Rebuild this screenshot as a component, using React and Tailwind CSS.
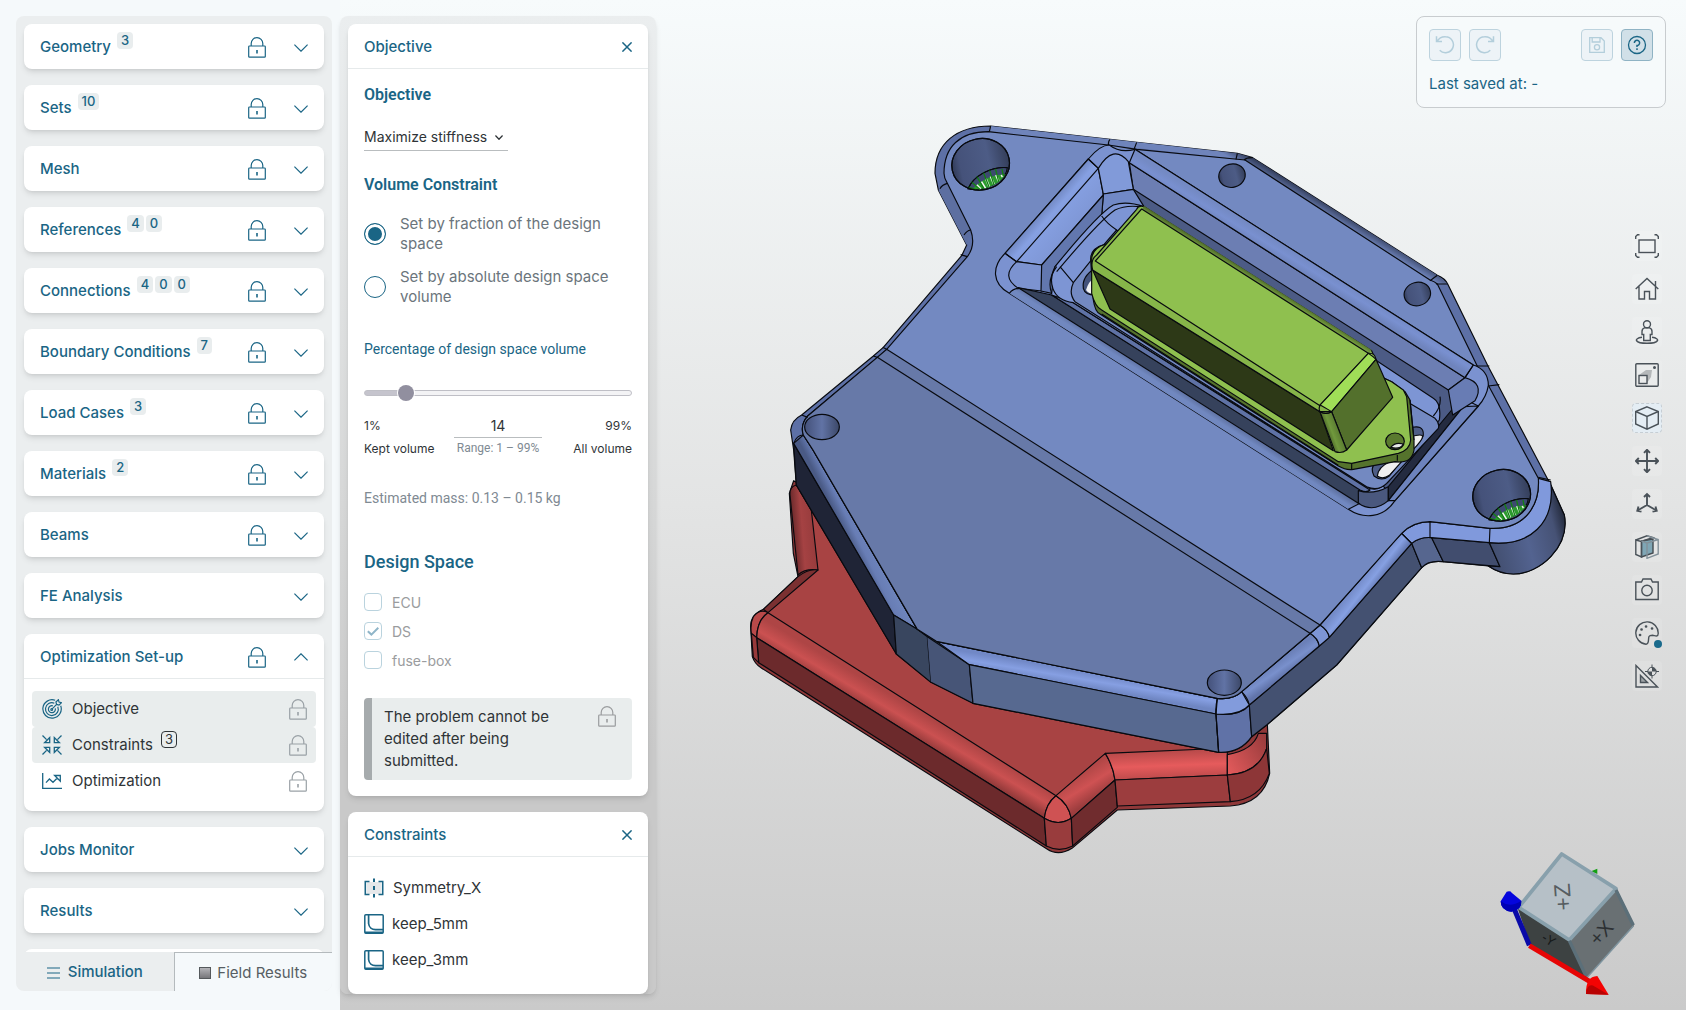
import { useState } from "react";

const sections = [
  { title: "Geometry", counts: [3], locked: true },
  { title: "Sets", counts: [10], locked: true },
  { title: "Mesh", counts: [], locked: true },
  { title: "References", counts: [4, 0], locked: true },
  { title: "Connections", counts: [4, 0, 0], locked: true },
  { title: "Boundary Conditions", counts: [7], locked: true },
  { title: "Load Cases", counts: [3], locked: true },
  { title: "Materials", counts: [2], locked: true },
  { title: "Beams", counts: [], locked: true },
  { title: "FE Analysis", counts: [], locked: false },
];

const LockIcon = ({ className = "" }) => (
  <svg viewBox="0 0 18 21" className={`w-[18px] h-[21px] shrink-0 ${className}`} fill="none" stroke="currentColor" strokeWidth="1.2">
    <rect x="0.7" y="9" width="16.6" height="11.2" rx="0.8" />
    <path d="M3.2 9V6.4a5.8 5.8 0 0 1 11.6 0V9" />
    <path d="M9 13v3.6" strokeWidth="1.6" />
  </svg>
);

const Chevron = ({ up }) => (
  <svg viewBox="0 0 14 8" className="w-[14px] h-2 shrink-0" fill="none" stroke="currentColor" strokeWidth="1.2">
    <path d={up ? "M0.4 7.4 7 0.8l6.6 6.6" : "M0.4 0.6 7 7.2l6.6-6.6"} />
  </svg>
);

const CloseIcon = () => (
  <svg viewBox="0 0 10 10" className="w-[10px] h-[10px]" stroke="currentColor" strokeWidth="1.5">
    <path d="M0.4 0.4 9.6 9.6M9.6 0.4 0.4 9.6" />
  </svg>
);

const TargetIcon = () => (
  <svg viewBox="0 0 20 20" className="w-5 h-5" fill="none" stroke="currentColor" strokeWidth="1.2">
    <path d="M13.2 1.3A9.2 9.2 0 1 0 18.7 6.8" />
    <path d="M12.3 4.2A6.4 6.4 0 1 0 15.8 7.7" />
    <path d="M10.8 6.8A3.5 3.5 0 1 0 13.3 9.4" />
    <path d="M9.7 10.4 14.6 5.4M14.6 5.4 13.9 3 16.4.7l.6 2.4 2.4.6L17 6.1z" />
    <circle cx="9.7" cy="10.4" r="0.9" />
  </svg>
);

const ConvergeIcon = () => (
  <svg viewBox="0 0 20 20" className="w-5 h-5" fill="none" stroke="currentColor" strokeWidth="1.3">
    <path d="M0.5 0.5 4.6 4.6M19.5 0.5 15.4 4.6M0.5 19.5 4.6 15.4M19.5 19.5 15.4 15.4" />
    <path d="M7.7 2.6V7.7H2.6L4.3 6 6 4.3zM12.3 2.6V7.7H17.4L15.7 6 14 4.3zM7.7 17.4V12.3H2.6L4.3 14 6 15.7zM12.3 17.4V12.3H17.4L15.7 14 14 15.7z" />
  </svg>
);

const TrendIcon = () => (
  <svg viewBox="0 0 20 16" className="w-5 h-4" fill="none" stroke="currentColor" strokeWidth="1.3">
    <path d="M0.7 0V15.3H20" />
    <path d="M4 9.6 7.4 6 11 9.3 15.3 5M12.6 2.5H18.3V8.2L15.4 5.3z" />
  </svg>
);

const SymmetryIcon = () => (
  <svg viewBox="0 0 20 20" className="w-5 h-5" fill="none" stroke="#1a6585" strokeWidth="1.6">
    <rect x="3" y="4" width="14" height="12" fill="#e6e8ea" stroke="none" />
    <path d="M5.5 3.5H1.3V16.5H5.5M14.5 3.5H18.7V16.5H14.5" />
    <path d="M10 0.5V4M10 8V12M10 16V19.5" strokeWidth="2" />
  </svg>
);

const KeepIcon = () => (
  <svg viewBox="0 0 20 20" className="w-5 h-5" fill="none" stroke="#1a6585" strokeWidth="1.5">
    <rect x="0.8" y="0.8" width="18.4" height="18.4" rx="1" />
    <path d="M4.6 1V9.5C5 13.5 8 15.7 11.5 15.7H19" strokeWidth="1.7" />
    <path d="M1 18.4H19" strokeWidth="1.8" />
  </svg>
);

const SectionCard = ({ title, counts = [], locked, open, children }) => (
  <section className="shrink-0 rounded-lg bg-white shadow-md">
    <button type="button" aria-expanded={!!open} className={`flex h-[45px] w-full items-center px-4 pt-0.5 text-[#1a6585] ${open ? "border-b border-[#e6eaeb]" : ""}`}>
      <span className="text-[15px] font-medium">{title}</span>
      {counts.length > 0 && (
        <span className="mb-3.5 ml-1.5 flex gap-0.5">
          {counts.map((n, i) => (
            <span key={i} className="h-[17px] rounded bg-[#e9edee] px-1 text-[13px] leading-[17px] font-medium">{n}</span>
          ))}
        </span>
      )}
      <span className="ml-auto flex items-center gap-7">
        {locked && <LockIcon />}
        <Chevron up={open} />
      </span>
    </button>
    {children}
  </section>
);

const setupItems = [
  { label: "Objective", icon: <TargetIcon />, active: true },
  { label: "Constraints", icon: <ConvergeIcon />, active: true, count: 3 },
  { label: "Optimization", icon: <TrendIcon /> },
];

const Sidebar = () => (
  <aside className="h-full w-[340px] shrink-0 bg-[#f5f9fb] pt-4 pr-2 pb-[19px] pl-4">
    <div className="flex h-full flex-col overflow-hidden rounded-lg bg-[#ebeeef]">
      <div className="flex min-h-0 flex-1 flex-col gap-4 overflow-hidden p-2 pb-0">
        {sections.map((s) => (
          <SectionCard key={s.title} {...s} />
        ))}
        <SectionCard title="Optimization Set-up" locked open>
          <ul className="px-2 py-3">
            {setupItems.map((item) => (
              <li key={item.label}>
                <button type="button" className={`flex h-9 w-full items-center rounded pr-[9px] pl-2.5 text-[15px] text-[#2f3437] ${item.active ? "bg-[#e9eded]" : ""}`}>
                  <span className="mr-2.5 text-[#1a6585]">{item.icon}</span>
                  {item.label}
                  {item.count && (
                    <span className="mb-3 ml-2 h-[17px] rounded border border-[#2f3437] px-[3px] text-[13px] leading-[15px]">{item.count}</span>
                  )}
                  <LockIcon className="ml-auto text-[#9aa1a6]" />
                </button>
              </li>
            ))}
          </ul>
        </SectionCard>
        <SectionCard title="Jobs Monitor" />
        <SectionCard title="Results" />
        <div className="h-[45px] shrink-0 rounded-lg bg-white shadow-md" />
      </div>
      <div className="flex h-[39px] shrink-0 text-[15px]">
        <button type="button" className="flex flex-1 items-center justify-center gap-2 pt-0.5 font-medium text-[#1a6585]">
          <svg viewBox="0 0 13 12" className="h-3 w-[13px]" stroke="currentColor" strokeWidth="1.1">
            <path d="M0 1H13M0 6H13M0 11H13" />
          </svg>
          Simulation
        </button>
        <button type="button" className="flex flex-1 items-center justify-center gap-1.5 border-t border-l border-[#b4babd] bg-[#f5f9fb] pt-0.5 text-[#575e63]">
          <span className="h-3 w-3 border border-[#55595c] bg-linear-to-b from-[#b4b4b8] to-[#77777b]" />
          Field Results
        </button>
      </div>
    </div>
  </aside>
);

const PanelHeader = ({ title }) => (
  <header className="flex h-[45px] items-center justify-between border-b border-[#e6eaeb] px-4 pt-0.5 text-[#1a6585]">
    <h2 className="text-[15px] font-medium">{title}</h2>
    <button type="button" aria-label={`Close ${title}`}>
      <CloseIcon />
    </button>
  </header>
);

const Radio = ({ id, label, checked, onChange }) => (
  <label htmlFor={id} className="flex items-center gap-[14px] text-[15px] leading-5 text-[#6b757c]">
    <input
      id={id}
      type="radio"
      name="volume-mode"
      checked={checked}
      onChange={onChange}
      className="h-[22px] w-[22px] shrink-0 appearance-none rounded-full border border-[#1a6585] bg-white checked:bg-[#1a6585] checked:shadow-[inset_0_0_0_3px_white]"
    />
    {label}
  </label>
);

const ObjectivePanel = () => {
  const [mode, setMode] = useState("fraction");
  const [percent, setPercent] = useState(14);
  const fill = ((percent - 1) / 98) * 100;

  return (
    <section className="shrink-0 rounded-lg bg-white shadow-md">
      <PanelHeader title="Objective" />
      <div className="px-4 pt-[15px] pb-4">
        <h3 className="font-['Roboto',sans-serif] text-[16px] leading-[22px] font-semibold text-[#1a6585]">Objective</h3>
        <div className="relative mt-[17px] w-36">
          <select aria-label="Objective" className="h-[28px] w-full appearance-none border-b border-[#b9bdbf] bg-transparent text-[14px] text-[#2f3437]">
            <option>Maximize stiffness</option>
          </select>
          <svg viewBox="0 0 8 5" className="pointer-events-none absolute top-3 right-[5px] h-[5px] w-2" fill="none" stroke="#2f3437" strokeWidth="1.3">
            <path d="M0.4 0.5 4 4.3 7.6 0.5" />
          </svg>
        </div>

        <h3 className="mt-[23px] font-['Roboto',sans-serif] text-[16px] leading-[22px] font-semibold text-[#1a6585]">Volume Constraint</h3>
        <div className="mt-[18px] flex flex-col gap-[13px]">
          <Radio id="fraction" label="Set by fraction of the design space" checked={mode === "fraction"} onChange={() => setMode("fraction")} />
          <Radio id="absolute" label="Set by absolute design space volume" checked={mode === "absolute"} onChange={() => setMode("absolute")} />
        </div>

        <label htmlFor="percent" className="mt-8 block font-['Roboto',sans-serif] text-[14px] leading-5 text-[#1a6585]">
          Percentage of design space volume
        </label>
        <input
          id="percent"
          type="range"
          min="1"
          max="99"
          value={percent}
          onChange={(e) => setPercent(Number(e.target.value))}
          style={{ background: `linear-gradient(to right, #c5c4cd ${fill}%, #f3f3f5 ${fill}%)` }}
          className="mt-[31px] block h-1.5 w-full appearance-none rounded-full border border-[#bfbfc6] [&::-webkit-slider-thumb]:h-4 [&::-webkit-slider-thumb]:w-4 [&::-webkit-slider-thumb]:appearance-none [&::-webkit-slider-thumb]:rounded-full [&::-webkit-slider-thumb]:bg-[#918f9f] [&::-webkit-slider-thumb]:shadow-[0_0_0_1px_white]"
        />
        <div className="mt-[18px] flex justify-between text-[12px] text-[#2f3437]">
          <div className="w-[80px] leading-[23px] whitespace-nowrap">
            <p>1%</p>
            <p>Kept volume</p>
          </div>
          <div className="w-[88px] text-center">
            <input
              type="text"
              aria-label="Volume percentage"
              value={percent}
              onChange={(e) => setPercent(Number(e.target.value) || 1)}
              className="h-[24px] w-full border-b border-[#b9bdbf] text-center text-[14px]"
            />
            <p className="font-['Roboto',sans-serif] text-[12px] leading-5 whitespace-nowrap text-[#808a93]">Range: 1 – 99%</p>
          </div>
          <div className="w-[80px] text-right leading-[23px]">
            <p>99%</p>
            <p>All volume</p>
          </div>
        </div>
        <p className="mt-[28px] font-['Roboto',sans-serif] text-[14px] leading-5 text-[#808a93]">Estimated mass: 0.13 – 0.15 kg</p>

        <h3 className="mt-[42px] font-['Roboto',sans-serif] text-[18px] leading-6 font-medium text-[#1a6585]">Design Space</h3>
        <div className="mt-[19px] flex flex-col gap-[11px]">
          {["ECU", "DS", "fuse-box"].map((name) => (
            <label key={name} className="relative flex h-[18px] items-center gap-[10px] text-[14px] text-[#9a9c9e]">
              <input type="checkbox" disabled defaultChecked={name === "DS"} className="peer h-[18px] w-[18px] appearance-none rounded border border-[#bad3de] bg-white" />
              <svg viewBox="0 0 12 9" className="absolute top-[5px] left-[3px] hidden h-[9px] w-3 peer-checked:block" fill="none" stroke="#8fb5c8" strokeWidth="2">
                <path d="M0.8 4.2 4.4 7.6 11.3 0.8" />
              </svg>
              {name}
            </label>
          ))}
        </div>

        <div className="mt-[29px] flex items-start justify-between rounded border-l-8 border-[#a6abad] bg-[#e9eded] pt-2 pr-4 pb-2 pl-3">
          <p className="w-[176px] text-[15px] leading-[22px] text-[#2f3437]">The problem cannot be edited after being submitted.</p>
          <LockIcon className="text-[#9a9c9e]" />
        </div>
      </div>
    </section>
  );
};

const ConstraintsPanel = () => (
  <section className="shrink-0 rounded-lg bg-white shadow-md">
    <PanelHeader title="Constraints" />
    <ul className="px-4 pt-[13px] pb-4 text-[15px] text-[#2f3437]">
      <li className="flex h-9 items-center gap-[9px]"><SymmetryIcon />Symmetry_X</li>
      <li className="flex h-9 items-center gap-2"><KeepIcon />keep_5mm</li>
      <li className="flex h-9 items-center gap-2"><KeepIcon />keep_3mm</li>
    </ul>
  </section>
);

const SaveBox = () => (
  <div className="w-[250px] rounded-lg border border-[#c8cccf] bg-[#f6fafb]/80 p-3 text-[#1a6585]">
    <div className="flex gap-2">
      <button type="button" aria-label="Undo" disabled className="grid h-8 w-8 place-items-center rounded border border-[#bdd3de] bg-[#edf3f7] text-[#b3cedb]">
        <svg viewBox="0 0 20 20" className="h-5 w-5" fill="none" stroke="currentColor" strokeWidth="1.5">
          <path d="M1.500 1.200V6.600H7M1.900 6.500C4 3 7 1.500 10.500 1.700A8 8 0 1 1 4.700 15.300" />
        </svg>
      </button>
      <button type="button" aria-label="Redo" disabled className="grid h-8 w-8 place-items-center rounded border border-[#bdd3de] bg-[#edf3f7] text-[#b3cedb]">
        <svg viewBox="0 0 20 20" className="h-5 w-5" fill="none" stroke="currentColor" strokeWidth="1.5">
          <path d="M18.500 1.200V6.600H13M18.100 6.500C16 3 13 1.500 9.500 1.700A8 8 0 1 0 15.300 15.300" />
        </svg>
      </button>
      <button type="button" aria-label="Save" disabled className="ml-auto grid h-8 w-8 place-items-center rounded border border-[#bdd3de] bg-[#edf3f7] text-[#b3cedb]">
        <svg viewBox="0 0 18 18" className="h-[18px] w-[18px]" fill="none" stroke="currentColor" strokeWidth="1.3">
          <path d="M1.700 1.700H13L16.300 5V16.300H1.700zM4.200 1.700V6H12V1.700" />
          <circle cx="9" cy="11.3" r="2.6" />
        </svg>
      </button>
      <button type="button" aria-label="Help" className="grid h-8 w-8 place-items-center rounded border border-[#8fb3c4] bg-[#d1e0e8]">
        <svg viewBox="0 0 20 20" className="h-5 w-5" fill="none" stroke="currentColor" strokeWidth="1.3">
          <circle cx="10" cy="10" r="8.5" />
          <path d="M7.400 8A2.600 2.600 0 1 1 10 10.500V12" strokeWidth="1.5" />
          <path d="M10 13.300V15" strokeWidth="1.5" />
        </svg>
      </button>
    </div>
    <p className="mt-3 text-[15px] leading-[22px]">Last saved at: -</p>
  </div>
);

const viewTools = [
  {
    name: "Fit view",
    icon: (
      <>
        <rect x="4" y="6" width="16" height="12.5" />
        <path d="M.7 5V2.500L2.500.7H4.500M19.500.7h2L23.300 2.500V5M.7 19v2.500l1.800 1.800h2M19.500 23.300h2l1.800-1.800V19" />
      </>
    ),
  },
  { name: "Home view", icon: <path d="M.7 12 12 1.500 23.300 12M4 9.500V22H9.500V14.500H14.500V22H20.500V9.500M20.500 9V4" /> },
  {
    name: "Walk",
    icon: (
      <>
        <circle cx="12" cy="4.2" r="3.5" />
        <path d="M9.500 7.800H14.500C16.500 8.500 17 9.500 17 11.500V14.500H15.300V20.500H8.700V14.500H7V11.500C7 9.500 7.500 8.500 9.500 7.800z" />
        <path d="M7 17.300C-2 18.500 0 23.300 12 23.300S26 18.500 17 17.300" />
      </>
    ),
  },
  {
    name: "Projection",
    icon: (
      <>
        <path d="M4 12 11 7H17L16 14 12 20V12z" fill="#b5b8ba" stroke="none" />
        <rect x=".8" y=".8" width="22.4" height="22.4" rx="1" />
        <rect x="4" y="12.5" width="8" height="8" />
        <circle cx="19.5" cy="4.5" r="0.8" />
      </>
    ),
  },
  { name: "Shading", active: true, icon: <path d="M12 .8 23.300 5.500V18L12 23.200.7 18V5.500zM.7 5.500 12 10.500 23.300 5.500M12 10.500V23" /> },
  { name: "Pan", icon: <path d="M12 .8V23.200M.8 12H23.200M9 3.800 12 .8 15 3.800M9 20.200 12 23.200 15 20.200M3.800 9 .8 12 3.800 15M20.200 9 23.200 12 20.200 15" strokeWidth="1.9" /> },
  { name: "Axes", icon: <path d="M12 2V13M12 13 2.500 18.500M12 13 21.500 18.500M9 5 12 2 15 5M3.500 14.500 2.300 18.700 6.500 19.700M20.500 14.500 21.700 18.700 17.500 19.700" strokeWidth="1.9" /> },
  {
    name: "Section cut",
    icon: (
      <>
        <path d="M6.500 6 18 4V18L6.500 22z" fill="#7fa6b5" stroke="#454c52" />
        <path d="M.8 5 6.500 6.500V22L.8 19.500zM.8 5 12 .8 18 2.500 6.500 6.500" />
        <path d="M12 .8 23.200 4.500V19L12 23.300V8L23.200 4.500M12 8 6.500 6" stroke="#83919a" />
      </>
    ),
  },
  {
    name: "Screenshot",
    icon: (
      <>
        <path d="M.8 4H6.500L8 1H16L17.500 4H23.200V21.500H.8z" />
        <circle cx="12" cy="12.5" r="5.2" />
      </>
    ),
  },
  {
    name: "Appearance",
    dot: true,
    icon: (
      <>
        <path d="M14 15.500C13 17.500 14.500 23.200 11 23.200A11.200 11.200 0 1 1 23.200 12.500C23 16.500 20 14.500 17.500 14.300 16 14.300 14.500 14.500 14 15.500z" />
        <path d="M5 14h.1M6.500 8.500h.1M11 5.500h.1M17 7.500h.1" strokeWidth="2.6" strokeLinecap="round" />
      </>
    ),
  },
  {
    name: "Measure",
    icon: (
      <>
        <path d="M1 1.500V23H22.500z" />
        <path d="M5.500 11.500V18.500H12.500z" fill="#9fa4a7" />
        <circle cx="17" cy="7.5" r="4.2" strokeWidth="1" />
        <path d="M17 7.500V3.300A4.200 4.200 0 0 1 21.200 7.500zM17 7.500V11.700A4.200 4.200 0 0 1 12.800 7.500z" fill="#4a5259" stroke="none" />
        <path d="M17 .5V3.300M21 7.500H24M17 11.700V14.500M10 7.500H13" strokeWidth="1" />
      </>
    ),
  },
];

const ViewToolbar = () => (
  <nav aria-label="View tools" className="mt-[123px] mr-1 flex flex-col gap-[13px]">
    {viewTools.map((t) => (
      <button key={t.name} type="button" aria-label={t.name} className={`relative grid h-[30px] w-[30px] place-items-center rounded ${t.active ? "border border-dashed border-[#c6ced4] bg-[#e4edf4]" : "bg-white/10"}`}>
        <svg viewBox="0 0 24 24" className="h-6 w-6" fill="none" stroke="#4a5259" strokeWidth="1.4">
          {t.icon}
        </svg>
        {t.dot && <span className="absolute right-0 bottom-0 h-2 w-2 rounded-full bg-[#1a6a8c]" />}
      </button>
    ))}
  </nav>
);

const BigHole = ({ cx, cy }) => (
  <g transform={`translate(${cx} ${cy})`}>
    <ellipse rx="87" ry="77" transform="rotate(-12)" fill="url(#hole)" />
    <path d="M-38 74C-22 34 32 6 80 10C78 38 30 84-38 74z" fill="#3d4a70" />
    <path d="M-24 74C-4 52 28 32 74 30C62 54 20 80-24 74z" fill="#2c9a2e" stroke="none" />
    <path d="M-12 62 0 74M2 52 14 72M16 44 26 68M30 36 40 60M46 32 54 50M62 32 66 38" stroke="#f3f5f4" strokeWidth="6" />
    <path d="M-38 68-14 76M-28 52 0 77M-12 36 12 76M8 24 26 70M26 16 40 62M44 12 54 52M64 14 68 36" stroke="#128014" strokeWidth="4" />
    <path d="M-38 74C-22 34 32 6 80 10" fill="none" strokeWidth="3" />
    <ellipse rx="87" ry="77" transform="rotate(-12)" fill="none" />
  </g>
);

const Model = () => (
  <svg viewBox="-1200 -330 4038 3030" className="absolute inset-0 h-full w-full" role="img" aria-label="3D model" stroke="#080a0f" strokeWidth="3.5" strokeLinejoin="round">
    <defs>
      <linearGradient id="hole">
        <stop offset="0" stopColor="#313b58" />
        <stop offset="0.15" stopColor="#45527a" />
        <stop offset="0.65" stopColor="#4d5c86" />
        <stop offset="1" stopColor="#343e5a" />
      </linearGradient>
      <linearGradient id="hole2">
        <stop offset="0" stopColor="#44517a" />
        <stop offset="0.5" stopColor="#6173a5" />
        <stop offset="1" stopColor="#3c4868" />
      </linearGradient>
      <linearGradient id="redBevel" gradientUnits="userSpaceOnUse" x1="500" y1="1783" x2="460" y2="1850">
        <stop offset="0" stopColor="#ae4545" />
        <stop offset="0.5" stopColor="#cb5151" />
        <stop offset="1" stopColor="#8e3838" />
      </linearGradient>
      <linearGradient id="redBevel2" gradientUnits="userSpaceOnUse" x1="1270" y1="1922" x2="1273" y2="2004">
        <stop offset="0" stopColor="#b64949" />
        <stop offset="0.55" stopColor="#e65b5c" />
        <stop offset="1" stopColor="#bf4b4c" />
      </linearGradient>
      <linearGradient id="redBevel3" gradientUnits="userSpaceOnUse" x1="1018" y1="1990" x2="1065" y2="2065">
        <stop offset="0" stopColor="#b04646" />
        <stop offset="0.5" stopColor="#cf5253" />
        <stop offset="1" stopColor="#9c3d3e" />
      </linearGradient>
      <linearGradient id="redEdge" gradientUnits="userSpaceOnUse" x1="150" y1="1290" x2="228" y2="1284">
        <stop offset="0" stopColor="#572123" />
        <stop offset="0.5" stopColor="#a54243" />
        <stop offset="1" stopColor="#963b3c" />
      </linearGradient>
      <linearGradient id="redLobe" gradientUnits="userSpaceOnUse" x1="1462" y1="1960" x2="1580" y2="1890">
        <stop offset="0" stopColor="#dd5859" />
        <stop offset="1" stopColor="#9a3c3d" />
      </linearGradient>
      <linearGradient id="frontBevel" gradientUnits="userSpaceOnUse" x1="1010" y1="1680" x2="1002" y2="1728">
        <stop offset="0" stopColor="#7188c6" />
        <stop offset="0.5" stopColor="#869fe2" />
        <stop offset="1" stopColor="#6f86c2" />
      </linearGradient>
      <linearGradient id="leftBevel" gradientUnits="userSpaceOnUse" x1="290" y1="1220" x2="350" y2="1190">
        <stop offset="0" stopColor="#4a5a85" />
        <stop offset="0.4" stopColor="#687db5" />
        <stop offset="1" stopColor="#7087be" />
      </linearGradient>
      <linearGradient id="sideBevel" gradientUnits="userSpaceOnUse" x1="1840" y1="1435" x2="1882" y2="1468">
        <stop offset="0" stopColor="#748bc8" />
        <stop offset="0.5" stopColor="#86a0e2" />
        <stop offset="1" stopColor="#5f73ab" />
      </linearGradient>
      <linearGradient id="sideBevel2" gradientUnits="userSpaceOnUse" x1="1607" y1="1658" x2="1634" y2="1697">
        <stop offset="0" stopColor="#6b80b8" />
        <stop offset="0.5" stopColor="#7990cc" />
        <stop offset="1" stopColor="#6174aa" />
      </linearGradient>
      <linearGradient id="edgeTop" gradientUnits="userSpaceOnUse" x1="1840" y1="330" x2="1823" y2="358">
        <stop offset="0" stopColor="#35405f" />
        <stop offset="1" stopColor="#6f84bb" />
      </linearGradient>
      <linearGradient id="wallNw" gradientUnits="userSpaceOnUse" x1="920" y1="290" x2="1000" y2="360">
        <stop offset="0" stopColor="#738ac5" />
        <stop offset="0.25" stopColor="#86a0e2" />
        <stop offset="1" stopColor="#7f97d6" />
      </linearGradient>
      <linearGradient id="wallSw" gradientUnits="userSpaceOnUse" x1="1332" y1="868" x2="1350" y2="840">
        <stop offset="0" stopColor="#7188c0" />
        <stop offset="1" stopColor="#4d5c84" />
      </linearGradient>
      <linearGradient id="wallNe" gradientUnits="userSpaceOnUse" x1="1690" y1="442" x2="1668" y2="478">
        <stop offset="0" stopColor="#748ac4" />
        <stop offset="0.5" stopColor="#7990d0" />
        <stop offset="1" stopColor="#6f84bd" />
      </linearGradient>
      <linearGradient id="greenTop" gradientUnits="userSpaceOnUse" x1="1560" y1="500" x2="1545" y2="524">
        <stop offset="0" stopColor="#3f5521" />
        <stop offset="1" stopColor="#8cbc4d" />
      </linearGradient>
      <linearGradient id="greenEdge" gradientUnits="userSpaceOnUse" x1="1755" y1="970" x2="1795" y2="955">
        <stop offset="0" stopColor="#3e5220" />
        <stop offset="0.5" stopColor="#70993d" />
        <stop offset="1" stopColor="#5b7c31" />
      </linearGradient>
      <linearGradient id="lobe" gradientUnits="userSpaceOnUse" x1="2240" y1="1300" x2="2476" y2="1240">
        <stop offset="0" stopColor="#414d6d" />
        <stop offset="0.5" stopColor="#536390" />
        <stop offset="0.85" stopColor="#465275" />
        <stop offset="1" stopColor="#262d40" />
      </linearGradient>
    </defs>

    {/* fuse box cover, red */}
    <path d="M161 1112 148 1150 160 1330 174 1400 70 1498Q30 1515 32 1552L37 1640Q44 1662 64 1674L921 2217Q955 2240 996 2215L1132 2100 1471 2088Q1570 2080 1589 1990L1580 1800 900 1500z" fill="#8f3839" />
    <path d="M169 1120 214 1200 234 1380 84 1508 948 2057 1096 1930 1470 1915 1500 1800 700 1600z" fill="#a84343" stroke="none" />
    <path d="M169 1125Q148 1130 150 1155L174 1395Q195 1375 234 1380L214 1200z" fill="url(#redEdge)" />
    <path d="M70 1498 174 1400Q205 1375 234 1380L84 1508z" fill="#7b3031" />
    <path d="M84 1508Q60 1495 40 1520 30 1540 34 1570L50 1583Q52 1530 84 1508z" fill="#b84949" />
    <path d="M84 1508 948 2057Q918 2080 913 2125L50 1583Q52 1530 84 1508z" fill="url(#redBevel)" />
    <path d="M50 1583 913 2125 919 2208 56 1658z" fill="#6c2a2c" />
    <path d="M34 1570 50 1583 56 1658 40 1642z" fill="#97393a" />
    <path d="M948 2057Q985 2080 994 2125 955 2150 913 2125 918 2080 948 2057z" fill="#cf5253" />
    <path d="M913 2125Q955 2150 994 2125L998 2208Q958 2228 919 2208z" fill="#993c3d" />
    <path d="M948 2057 1096 1930Q1120 1970 1125 2010L994 2125Q985 2080 948 2057z" fill="url(#redBevel3)" />
    <path d="M994 2125 1125 2010 1132 2092 998 2208z" fill="#702c2e" />
    <path d="M1096 1930 1400 1917 1462 1920V1995L1125 2010Q1120 1970 1096 1930z" fill="url(#redBevel2)" />
    <path d="M1125 2010 1462 1995 1471 2075 1132 2088z" fill="#9c3d3e" />
    <path d="M1462 1934Q1540 1920 1555 1870L1580 1870V1915Q1555 1990 1462 1995z" fill="url(#redLobe)" />
    <path d="M1462 1995Q1555 1990 1580 1915L1588 1990Q1560 2068 1471 2075z" fill="#8d3637" />

    {/* housing, blue */}
    <path d="M585 190C585 100 650 48 752 48L1110 88 1190 97 1492 130 1538 143 2092 496Q2115 505 2123 522L2245 770 2435 1130 2473 1215C2490 1310 2400 1392 2320 1392Q2280 1392 2245 1368L2110 1355Q2065 1350 2045 1373L1790 1665 1580 1845 1535 1880Q1500 1930 1436 1927L699 1780 573 1717 469 1632 169 1125 161 1020 152 960Q155 930 185 915L400 738 430 712 665 437 680 405 595 240z" fill="#5d70a6" />
    <path d="M745 65 1515 150 2070 510 2092 522 2123 522 2092 496 1538 143 1492 130 752 48z" fill="url(#edgeTop)" stroke="none" />
    <path d="M595 240 680 405 692 360 622 220z" fill="#5d6fa1" stroke="none" />
    <path d="M161 1000 169 1125 469 1632 461 1515z" fill="#1f2436" />
    <path d="M161 1000 461 1515 532 1558 219 1020 190 975z" fill="url(#leftBevel)" />
    <path d="M461 1515 532 1558 562 1580 573 1717 469 1632z" fill="#39465f" />
    <path d="M562 1580 688 1664 699 1780 573 1717z" fill="#475577" stroke="none" />
    <path d="M562 1580 688 1664 699 1780 573 1717" fill="none" />
    <path d="M589 1594 1432 1765 1428 1812 688 1664z" fill="url(#frontBevel)" />
    <path d="M688 1664 1428 1812 1436 1927 699 1780z" fill="#576990" />
    <path d="M1428 1812Q1500 1818 1528 1785L1535 1880Q1500 1930 1436 1927z" fill="#6072a7" />
    <path d="M1528 1785 1738 1608 1768 1582 2015 1300 2045 1373 1790 1665 1580 1845 1535 1880z" fill="#445171" />
    <path d="M1505 1745 1710 1570Q1734 1585 1738 1608L1528 1785Q1524 1765 1505 1745z" fill="url(#sideBevel2)" />
    <path d="M1710 1570 1740 1545Q1764 1560 1768 1582L1738 1608Q1734 1585 1710 1570z" fill="#7d95d5" />
    <path d="M1740 1545 1965 1290 1985 1270 2015 1300 1768 1582Q1764 1560 1740 1545z" fill="url(#sideBevel)" />
    <path d="M1432 1765Q1480 1770 1505 1745L1528 1785Q1500 1818 1428 1812z" fill="#829bdc" />
    <path d="M2015 1300Q2040 1280 2075 1283L2110 1355Q2065 1350 2045 1373z" fill="#56668f" />
    <path d="M2075 1283 2248 1298 2280 1370 2110 1355z" fill="#414d6e" />
    <path d="M2248 1298C2370 1310 2440 1240 2432 1125L2473 1215C2490 1310 2400 1392 2320 1392Q2280 1392 2245 1368L2280 1370z" fill="url(#lobe)" />
    <path d="M2070 1235 2250 1255C2360 1260 2400 1180 2395 1105L2432 1115C2448 1240 2370 1310 2248 1298L2075 1283Q2040 1280 2015 1300L1985 1270Q2020 1235 2070 1235z" fill="#8099dc" />

    <path d="M612 190C612 110 660 65 745 65L1105 105 1190 118 1515 150 2070 510Q2085 515 2092 522L2215 775 2245 826 2395 1105C2400 1180 2360 1260 2250 1255L2070 1235Q2020 1235 1985 1270L1740 1545 1505 1745Q1480 1770 1432 1765L589 1594 532 1558 219 1020 190 975Q180 945 203 918L412 742 440 718 682 440Q708 405 692 360L622 220Q612 205 612 190z" fill="#7389c1" />
    <path d="M440 718 1740 1545 1505 1745Q1480 1770 1432 1765L589 1594 532 1558 219 1020 190 975Q180 945 203 918L412 742z" fill="#6779a8" />
    <path d="M412 742 1710 1570M400 738 412 742M428 712 440 718M185 915 203 922M161 1000Q170 975 190 975M600 236Q605 225 622 220M672 375Q680 362 692 360M662 434 682 440M752 48 748 65M1492 130 1488 148M1538 143Q1520 142 1512 150M2092 496 2070 512M2123 522 2088 522M2248 768H2205M2278 824 2245 828M2432 1110 2395 1102M1432 1765Q1426 1790 1428 1812L1436 1927M1985 1270 2015 1300M2070 1235V1283M2250 1255 2248 1298M1110 88Q1105 92 1105 105M1190 97 1182 118" fill="none" />

    {/* pocket */}
    <path d="M1045 147Q1080 105 1108 105 1140 130 1185 118L2200 765Q2245 780 2245 826 2240 860 2215 888L1965 1172C1930 1225 1870 1228 1825 1198L808 550C755 520 755 470 795 430z" fill="#7b92d0" />
    <path d="M1168 158 2175 803 2125 840 2110 870 1210 290 1180 238z" fill="#6c7eb3" />
    <path d="M1185 118 2200 765 2175 803 1168 158z" fill="url(#wallNe)" />
    <path d="M1180 238 2125 840Q2140 870 2135 915L1945 1145 1250 400z" fill="#4c5b85" />
    <path d="M795 430 1045 147 1075 175 1090 255 905 465 830 455z" fill="url(#wallNw)" />
    <path d="M830 455 1075 175" />
    <path d="M1075 175Q1120 100 1165 155L1180 238 1090 252z" fill="#819ad9" />
    <path d="M1090 252 1180 238 1212 290 1130 300 1085 318z" fill="#7189c6" />
    <path d="M830 455 905 465V543L835 535Q780 500 830 455z" fill="#7c93d0" />
    <path d="M905 465 1090 255 1085 318 945 470 935 550 903 543z" fill="#6277ae" />
    <path d="M808 550 835 535 1855 1180 1825 1198z" fill="url(#wallSw)" stroke="none" />
    <path d="M835 533 935 555 1860 1138 1855 1180z" fill="#36425c" />
    <path d="M935 555 1000 578 1890 1140Q1880 1150 1860 1140z" fill="#5f72a5" />
    <path d="M1855 1142Q1900 1155 1945 1130V1172Q1900 1210 1855 1180z" fill="#4a587e" />
    <path d="M1945 1130 2135 900 2170 890 1945 1172z" fill="#242b40" />
    <path d="M1945 1172 2170 890 2215 888 1965 1172z" fill="#6d83bd" />
    <path d="M2125 840 2175 803Q2235 820 2205 872L2138 915z" fill="#687cb4" />
    {/* pocket floor */}
    <path d="M945 470Q1075 310 1120 285 1160 272 1212 290L2080 865Q2105 880 2098 930L1945 1115Q1910 1150 1880 1130L1000 578C930 570 925 510 945 470z" fill="#7d95d4" />
    <path d="M1000 518Q1085 410 1130 360L2085 925Q2100 940 2095 955L1940 1120Q1915 1145 1880 1130L1005 575Q985 550 1000 518z" fill="#7389c1" />
    <path d="M950 485Q1080 330 1125 300 1155 285 1200 290M960 470 1000 518M1085 318Q1100 340 1130 360M1045 147 1075 175M795 430 830 455M2200 765 2175 803M2215 888 2195 878M2080 918Q2105 890 2100 860M1825 1198 1860 1180M935 550Q920 510 950 470M808 550Q820 535 840 535" fill="none" />
    <path d="M1030 535Q1025 500 1065 475V555Q1035 555 1030 535z" fill="#44527a" />
    <path d="M1038 540Q1045 515 1065 500V552Q1045 552 1038 540z" fill="#f2f2f2" stroke="none" />
    <path d="M2005 955Q2052 940 2050 975 2048 990 2005 1030z" fill="#4e5d86" />
    <path d="M2012 980Q2048 970 2048 980 2046 992 2020 1018L2005 1000z" fill="#f0f0f0" />
    <path d="M1905 1060Q1890 1075 1902 1098 1925 1116 1948 1098L1990 1045z" fill="#4e5d86" />
    <path d="M1912 1098Q1915 1070 1950 1055H1985L1948 1096Q1928 1110 1912 1098z" fill="#f0f0f0" />

    {/* relay, green */}
    <path d="M1095 403Q1050 415 1052 450L1060 570Q1065 605 1080 612L1795 1068Q1820 1082 1840 1078L1965 1055Q2015 1062 2022 1020V990L2010 870 1995 845 1955 815z" fill="#55732c" />
    <path d="M1095 403Q1055 415 1055 450V550Q1065 590 1085 600L1795 1055 1835 1060 1975 1030Q2010 1020 2012 990L2000 860 1990 840 1955 815 1700 700z" fill="#8fc04f" />
    <path d="M1835 1060V1078M1972 1035V1052M2010 870 2022 990M1085 612 1795 1066" fill="none" />
    <path d="M1058 480 1110 597 1780 1022 1740 905z" fill="#2d3917" />
    <path d="M1212 290Q1195 285 1190 298L1070 435Q1050 450 1058 480L1740 905 1775 905 1905 745 1895 722z" fill="#86b549" />
    <path d="M1212 287 1895 720 1885 732 1205 300z" fill="url(#greenTop)" stroke="none" />
    <path d="M1205 297 1885 730 1740 887 1066 453z" fill="#8fc04f" />
    <path d="M1740 885 1885 730Q1905 728 1908 748L1775 905Q1750 890 1740 885z" fill="#a0de57" />
    <path d="M1775 905 1908 748 1958 862 1820 1020z" fill="#53702c" />
    <path d="M1740 905Q1758 915 1775 905L1820 1020Q1805 1032 1785 1025z" fill="url(#greenEdge)" />
    <path d="M1740 885Q1735 898 1740 905 1758 915 1775 905M1885 730Q1900 740 1908 748" fill="none" />
    <ellipse cx="1965" cy="994" rx="28" ry="25" fill="#5a7a2f" />
    <path d="M1952 1012Q1965 995 1990 1002 1980 1020 1952 1012z" fill="#e8eaea" />

    {/* screw holes */}
    <BigHole cx={722} cy={163} />
    <BigHole cx={2285} cy={1156} />
    <ellipse cx="246" cy="951" rx="52" ry="38" fill="url(#hole2)" />
    <ellipse cx="1453" cy="1718" rx="51" ry="38" fill="url(#hole2)" />
    <ellipse cx="1476" cy="197" rx="40" ry="35" fill="url(#hole)" transform="rotate(-15 1476 197)" />
    <ellipse cx="2032" cy="552" rx="40" ry="35" fill="url(#hole)" transform="rotate(-15 2032 552)" />

    {/* orientation cube */}
    <g transform="translate(2220 2160)" stroke="none">
      <path d="M333 124 352 116V132z" fill="#13a013" />
      <path d="M112 232 268 332 320 444 150 345z" fill="#3d4242" />
      <path d="M268 332 410 176 462 288 320 444z" fill="#697073" />
      <path d="M245 68 410 176 268 332 112 232z" fill="#b6c0c7" />
      <path d="M245 72 408 176 268 330 116 232z" fill="none" stroke="#88a0ac" strokeWidth="11" />
      <path d="M268 332 318 438M408 180 460 286" fill="none" stroke="#5b6f79" strokeWidth="10" />
      <path d="M460 288 320 444" stroke="#7f95a0" strokeWidth="4" />
      <text transform="translate(274 240) rotate(-94)" fontSize="68" fontFamily="Liberation Sans, sans-serif" fill="#575d61">+Z</text>
      <text transform="translate(354 350) rotate(-48)" fontSize="60" fontFamily="Liberation Sans, sans-serif" fill="#2d3133">+X</text>
      <text transform="translate(182 330) rotate(32)" fontSize="40" fontFamily="Liberation Sans, sans-serif" fill="#171a1a">-Y</text>
      <path d="M104 240 148 346" stroke="#0a0aa8" strokeWidth="15" />
      <path d="M80 185Q92 182 95 188L124 212Q126 240 94 245 62 242 62 214z" fill="#0505dd" />
      <path d="M62 214Q90 235 124 212 126 240 94 245 62 242 62 214z" fill="#0000b4" />
      <path d="M148 347 330 455" stroke="#e60505" strokeWidth="15" />
      <path d="M318 492Q316 440 352 438L386 494z" fill="#f40303" />
      <path d="M318 492Q322 455 345 470L386 494z" fill="#b80202" />
    </g>
  </svg>
);

const App = () => {
  return (
    <div className="flex h-screen overflow-hidden font-['Inter',sans-serif]">
      <Sidebar />
      <main className="relative flex min-w-0 flex-1 items-start justify-between bg-linear-to-b from-[#f7fbfc] via-[#e3e4e4] to-[#cacaca]">
        <Model />
        <div className="relative h-full pt-4 pb-4">
          <div className="flex h-full w-[316px] flex-col gap-4 overflow-hidden rounded-lg bg-linear-to-b from-[#ebeeef] via-[#d6d7d7] to-[#c9c9c9] to-75% p-2 pb-0 shadow-md">
            <ObjectivePanel />
            <ConstraintsPanel />
          </div>
        </div>
        <div className="relative flex flex-col items-end pt-4 pr-5">
          <SaveBox />
          <ViewToolbar />
        </div>
      </main>
    </div>
  );
};

export default App;
